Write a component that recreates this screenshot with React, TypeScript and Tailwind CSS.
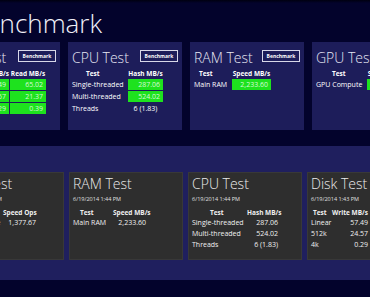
import React from "react";

const font = { fontFamily: '"Open Sans", "Noto Sans", sans-serif' };

function Btn() {
  return (
    <div className="w-[38px] h-[12px] border border-[#d8d8e8] flex items-center justify-center text-[5px] font-bold text-white leading-none">
      Benchmark
    </div>
  );
}

type TopRow = { label: string; values: string[]; green: boolean };

function TopCard({
  title,
  cols,
  headers,
  rows,
  testPad,
}: {
  title: string;
  cols: string;
  headers: string[];
  rows: TopRow[];
  testPad: string;
}) {
  return (
    <div className="w-[114px] shrink-0 h-[88px] bg-[#1d1d5a] pl-[4px] pr-[4px] pt-[8px]">
      <div className="flex justify-between items-start h-[20px]">
        <div className="text-[14px] font-light text-[#e8e8f4] leading-[14px] mt-[1px] whitespace-nowrap">{title}</div>
        <Btn />
      </div>
      <div className={`grid ${cols} gap-px text-[7px] text-white leading-[11px]`}>
        <div className={`font-bold text-[6.5px] leading-[8px] ${testPad}`}>{headers[0]}</div>
        {headers.slice(1).map((h) => (
          <div key={h} className="font-bold text-[6.5px] leading-[8px] text-center whitespace-nowrap">
            {h}
          </div>
        ))}
        {rows.map((r) => (
          <React.Fragment key={r.label}>
            <div className="whitespace-nowrap">{r.label}</div>
            {r.values.map((v, i) =>
              r.green ? (
                <div key={i} className="bg-[#1ee21e] text-right pr-[3px] text-[#d8f8d8]">
                  {v}
                </div>
              ) : (
                <div key={i} className="text-center">
                  {v}
                </div>
              )
            )}
          </React.Fragment>
        ))}
      </div>
    </div>
  );
}

function BottomCard({
  title,
  date,
  cols,
  headers,
  rows,
  testPad,
  valHead,
}: {
  title: string;
  date: string;
  cols: string;
  headers: string[];
  rows: [string, string][];
  testPad: string;
  valHead: string;
}) {
  return (
    <div className="w-[114px] shrink-0 h-[88px] bg-[#2e2e2e] border border-[#383838] pl-[3px] pt-[3px]">
      <div className="text-[14px] font-light text-[#ececec] leading-[16px] whitespace-nowrap">{title}</div>
      <div className="text-[5.5px] text-[#e0e0e0] leading-[6px] mt-[4px] whitespace-nowrap">{date}</div>
      <div className={`grid ${cols} text-[7px] text-[#f0f0f0] leading-[11px] mt-[6px]`}>
        <div className={`font-bold text-[6.5px] leading-[9px] ${testPad}`}>{headers[0]}</div>
        <div className={`font-bold text-[6.5px] leading-[9px] whitespace-nowrap ${valHead}`}>{headers[1]}</div>
        {rows.map(([l, v]) => (
          <React.Fragment key={l}>
            <div className="whitespace-nowrap">{l}</div>
            <div className="text-right whitespace-nowrap">{v}</div>
          </React.Fragment>
        ))}
      </div>
    </div>
  );
}

export default function App() {
  return (
    <div className="w-[370px] h-[297px] overflow-hidden bg-[#03032c] relative" style={font}>
      <div className="h-[3px] bg-gradient-to-b from-[#000010] to-[#03032c]" />
      <div className="h-[39px] flex items-start">
        <div className="ml-[-31px] text-[26px] font-light text-[#f0f0f8] leading-[26px] mt-[7px] whitespace-nowrap">
          Benchmark
        </div>
      </div>
      <div className="flex gap-[8px] ml-[-54px]">
        <TopCard
          title="Disk Test"
          cols="grid-cols-[22px_36px_36px]"
          headers={["Test", "Write MB/s", "Read MB/s"]}
          testPad="text-center"
          rows={[
            { label: "Linear", values: ["57.49", "65.02"], green: true },
            { label: "512k", values: ["24.57", "21.37"], green: true },
            { label: "4k", values: ["0.29", "0.39"], green: true },
          ]}
        />
        <TopCard
          title="CPU Test"
          cols="grid-cols-[55px_35px]"
          headers={["Test", "Hash MB/s"]}
          testPad="pl-[14px]"
          rows={[
            { label: "Single-threaded", values: ["287.06"], green: true },
            { label: "Multi-threaded", values: ["524.02"], green: true },
            { label: "Threads", values: ["6 (1.83)"], green: false },
          ]}
        />
        <TopCard
          title="RAM Test"
          cols="grid-cols-[37px_39px]"
          headers={["Test", "Speed MB/s"]}
          testPad="pl-[5px]"
          rows={[{ label: "Main RAM", values: ["2,233.60"], green: true }]}
        />
        <TopCard
          title="GPU Test"
          cols="grid-cols-[50px_35px]"
          headers={["Test", "Speed Ops"]}
          testPad="pl-[16px]"
          rows={[{ label: "GPU Compute", values: ["1,377.67"], green: true }]}
        />
      </div>
      <div className="h-[16px]" />
      <div className="h-[134px] bg-[#1f1f5e] pt-[26px]">
        <div className="flex gap-[5px] ml-[-50px]">
          <BottomCard
            title="GPU Test"
            date="6/19/2014 1:44 PM"
            cols="grid-cols-[49px_33px]"
            headers={["Test", "Speed Ops"]}
            testPad="pl-[10px]"
            valHead="text-right"
            rows={[["GPU Compute", "1,377.67"]]}
          />
          <BottomCard
            title="RAM Test"
            date="6/19/2014 1:44 PM"
            cols="grid-cols-[40px_33px]"
            headers={["Test", "Speed MB/s"]}
            testPad="pl-[7px]"
            valHead="text-right"
            rows={[["Main RAM", "2,233.60"]]}
          />
          <BottomCard
            title="CPU Test"
            date="6/19/2014 1:44 PM"
            cols="grid-cols-[52px_34px]"
            headers={["Test", "Hash MB/s"]}
            testPad="pl-[18px]"
            valHead="pl-[3px]"
            rows={[
              ["Single-threaded", "287.06"],
              ["Multi-threaded", "524.02"],
              ["Threads", "6 (1.83)"],
            ]}
          />
          <BottomCard
            title="Disk Test"
            date="6/19/2014 1:43 PM"
            cols="grid-cols-[20px_37px]"
            headers={["Test", "Write MB/s"]}
            testPad="pl-[2px]"
            valHead="text-right"
            rows={[
              ["Linear", "57.49"],
              ["512k", "24.57"],
              ["4k", "0.29"],
            ]}
          />
        </div>
      </div>
    </div>
  );
}
